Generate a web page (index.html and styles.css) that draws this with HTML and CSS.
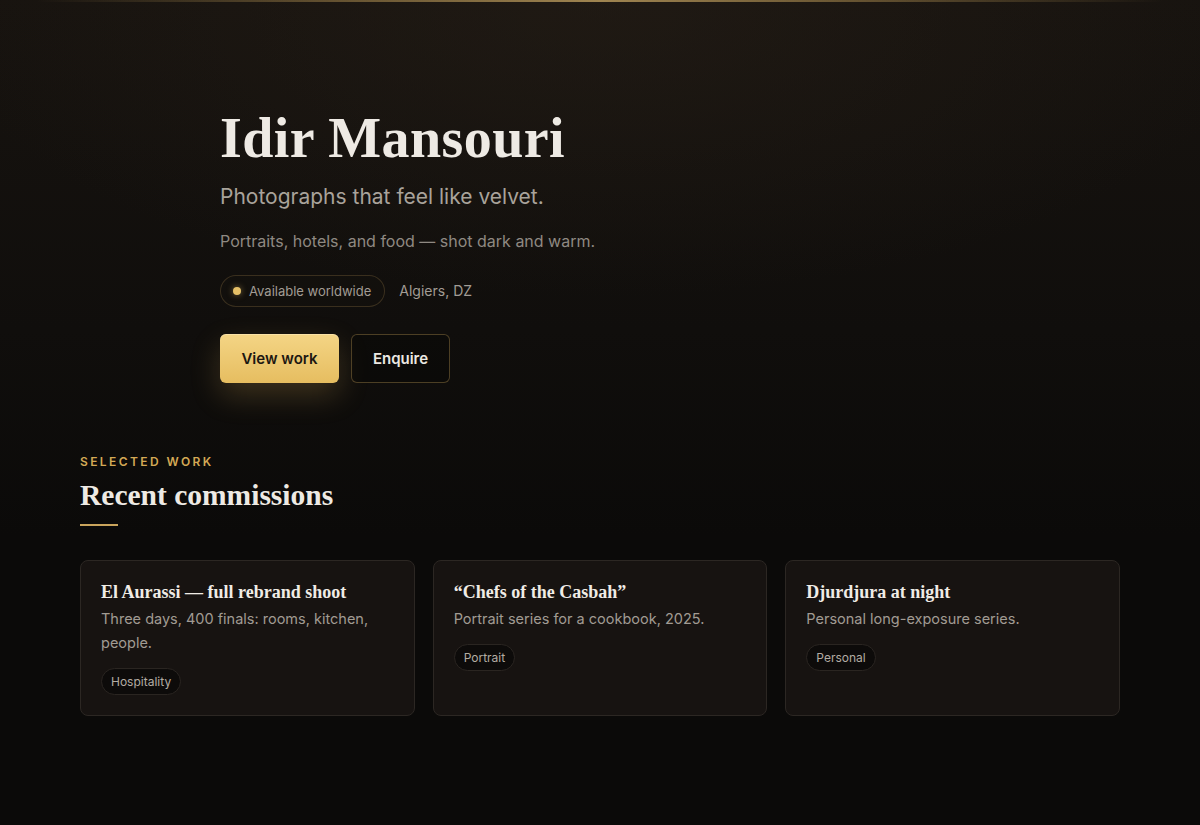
FILE: index.html
```html
<!DOCTYPE html>
<html lang="en">
<head>
  <meta charset="UTF-8">
  <meta name="viewport" content="width=device-width, initial-scale=1.0">
  <title>Idir Mansouri — Photography</title>
  <link rel="stylesheet" href="styles.css">
</head>
<body>
  <div class="topline"></div>

  <header class="hero">
    <h1>Idir Mansouri</h1>
    <p class="tagline">Photographs that feel like velvet.</p>
    <p class="lead">Portraits, hotels, and food — shot dark and warm.</p>

    <div class="meta">
      <span class="pill"><span class="dot"></span>Available worldwide</span>
      <span class="place">Algiers, DZ</span>
    </div>

    <div class="actions">
      <a href="#work" class="btn btn-gold">View work</a>
      <a href="#contact" class="btn btn-ghost">Enquire</a>
    </div>
  </header>

  <section class="work" id="work">
    <div class="eyebrow">Selected work</div>
    <h2>Recent commissions</h2>
    <div class="rule"></div>

    <div class="cards">
      <article class="card">
        <h3>El Aurassi — full rebrand shoot</h3>
        <p>Three days, 400 finals: rooms, kitchen, people.</p>
        <span class="tag">Hospitality</span>
      </article>
      <article class="card">
        <h3>“Chefs of the Casbah”</h3>
        <p>Portrait series for a cookbook, 2025.</p>
        <span class="tag">Portrait</span>
      </article>
      <article class="card">
        <h3>Djurdjura at night</h3>
        <p>Personal long-exposure series.</p>
        <span class="tag">Personal</span>
      </article>
    </div>
  </section>
</body>
</html>
```

FILE: styles.css
```css
/* Reset */
* {
  margin: 0;
  padding: 0;
  box-sizing: border-box;
}

/* Base */
body {
  font-family: 'Inter', 'Liberation Sans', sans-serif;
  color: #ece8e2;
  min-height: 100vh;
  background-color: #0b0a09;
  background-image:
    radial-gradient(ellipse 70% 45% at 50% 0%, rgba(40, 32, 24, 0.5), transparent 80%),
    linear-gradient(180deg, #17130f 0%, #100e0c 40%, #0b0a09 65%);
}

/* Gold hairline along the top */
.topline {
  height: 2px;
  background: linear-gradient(90deg, transparent 3%, rgba(201, 164, 92, 0.45) 30%, rgba(214, 178, 106, 0.7) 50%, rgba(201, 164, 92, 0.45) 70%, transparent 97%);
}

/* Hero */
.hero {
  max-width: 760px;
  margin: 0 auto;
  padding: 106px 0 70px;
}

h1 {
  font-family: 'Liberation Serif', 'Times New Roman', serif;
  font-size: 56px;
  font-weight: bold;
  line-height: 1.1;
  letter-spacing: 0.4px;
  color: #eeeae4;
}

.tagline {
  margin-top: 12px;
  font-size: 21px;
  line-height: 30px;
  color: #a9a39b;
}

.lead {
  margin-top: 16px;
  font-size: 16px;
  line-height: 26px;
  color: #8f8982;
}

.meta {
  display: flex;
  align-items: center;
  gap: 14px;
  margin-top: 21px;
}

.pill {
  display: inline-flex;
  align-items: center;
  gap: 8px;
  height: 32px;
  padding: 0 13px 0 12px;
  border: 1px solid rgba(201, 164, 92, 0.22);
  border-radius: 999px;
  background: rgba(20, 17, 13, 0.6);
  font-size: 13px;
  color: #a29c94;
}

.dot {
  width: 8px;
  height: 8px;
  border-radius: 50%;
  background: #e6c067;
  box-shadow: 0 0 6px rgba(230, 192, 103, 0.5);
}

.place {
  font-size: 14px;
  color: #a29c94;
}

/* Buttons */
.actions {
  display: flex;
  gap: 12px;
  margin-top: 27px;
}

.btn {
  display: inline-flex;
  align-items: center;
  justify-content: center;
  height: 49px;
  padding: 0 20px;
  border-radius: 6px;
  font-size: 15px;
  font-weight: 600;
  text-decoration: none;
}

.btn-gold {
  width: 119px;
  background: linear-gradient(180deg, #f4d585 0%, #e6bd60 100%);
  color: #1c1711;
  box-shadow: 0 12px 30px rgba(226, 184, 90, 0.22), inset 0 1px 0 rgba(255, 240, 200, 0.5);
}

.btn-ghost {
  width: 99px;
  border: 1px solid rgba(201, 164, 92, 0.35);
  background: rgba(8, 7, 6, 0.5);
  color: #ece8e2;
}

/* Selected work */
.work {
  max-width: 1040px;
  margin: 0 auto;
  padding-bottom: 100px;
}

.eyebrow {
  font-size: 12px;
  line-height: 18px;
  font-weight: 600;
  letter-spacing: 0.2em;
  text-transform: uppercase;
  color: #d4a955;
}

h2 {
  margin-top: 6px;
  font-family: 'Liberation Serif', 'Times New Roman', serif;
  font-size: 29.5px;
  line-height: 36px;
  font-weight: bold;
  color: #eeeae4;
}

.rule {
  width: 38px;
  height: 2px;
  margin-top: 11px;
  background: #c9a45c;
}

.cards {
  display: grid;
  grid-template-columns: repeat(3, 1fr);
  gap: 18px;
  margin-top: 34px;
}

.card {
  display: flex;
  flex-direction: column;
  align-items: flex-start;
  padding: 19px 20px 20px;
  min-height: 156px;
  background: #171311;
  border: 1px solid #2c2723;
  border-radius: 8px;
}

.card h3 {
  font-family: 'Liberation Serif', 'Times New Roman', serif;
  font-size: 18px;
  line-height: 24px;
  font-weight: bold;
  color: #f0ece6;
}

.card p {
  margin-top: 3px;
  font-size: 14.5px;
  line-height: 24px;
  color: #a19b93;
}

.tag {
  margin-top: 13px;
  padding: 0 9px;
  height: 27px;
  line-height: 25px;
  font-size: 12px;
  color: #b3aca3;
  background: #0d0b0a;
  border: 1px solid #2a2521;
  border-radius: 999px;
}
```
